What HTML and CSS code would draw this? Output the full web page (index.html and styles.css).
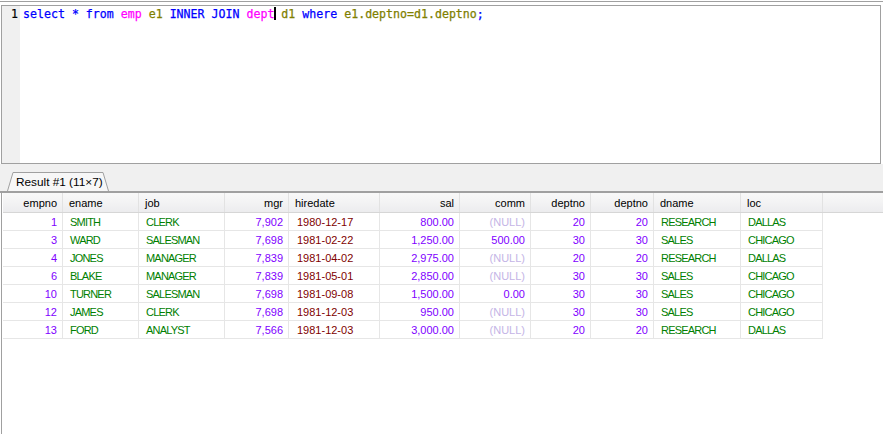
FILE: index.html
```html
<!DOCTYPE html>
<html>
<head>
<meta charset="utf-8">
<link rel="stylesheet" href="styles.css">
</head>
<body>
<div class="app">
  <div class="topline"></div>
  <div class="editor">
    <div class="gutter">1</div>
    <div class="code"><span class="kw">select</span> <span class="kw">*</span> <span class="kw">from</span> <span class="tb">emp</span> <span class="al">e1</span> <span class="kw">INNER</span> <span class="kw">JOIN</span> <span class="tb">dept</span><span class="caret"></span> <span class="al">d1</span> <span class="kw">where</span> <span class="al">e1.deptno=d1.deptno</span><span class="kw">;</span></div>
  </div>
  <div class="tabbar">
    <div class="tab">
      <svg class="tabshape" width="102" height="19" viewBox="0 0 102 19"><path d="M0.5 19 L6 0.5 L96 0.5 L101.5 19" fill="#f7f7f7" stroke="#a0a0a0" stroke-width="1"/></svg>
      <span class="tablabel">Result #1 (11×7)</span>
    </div>
  </div>
  <div class="grid">
    <div class="hrow">
      <div class="h r">empno</div><div class="h">ename</div><div class="h">job</div><div class="h r">mgr</div><div class="h">hiredate</div><div class="h r">sal</div><div class="h r">comm</div><div class="h r">deptno</div><div class="h r">deptno</div><div class="h">dname</div><div class="h">loc</div><div class="h fill"></div>
    </div>
    <div class="drow"><div class="c r n">1</div><div class="c s">SMITH</div><div class="c s">CLERK</div><div class="c r n">7,902</div><div class="c d">1980-12-17</div><div class="c r n">800.00</div><div class="c r null">(NULL)</div><div class="c r n">20</div><div class="c r n">20</div><div class="c s">RESEARCH</div><div class="c s">DALLAS</div></div>
    <div class="drow"><div class="c r n">3</div><div class="c s">WARD</div><div class="c s">SALESMAN</div><div class="c r n">7,698</div><div class="c d">1981-02-22</div><div class="c r n">1,250.00</div><div class="c r n">500.00</div><div class="c r n">30</div><div class="c r n">30</div><div class="c s">SALES</div><div class="c s">CHICAGO</div></div>
    <div class="drow"><div class="c r n">4</div><div class="c s">JONES</div><div class="c s">MANAGER</div><div class="c r n">7,839</div><div class="c d">1981-04-02</div><div class="c r n">2,975.00</div><div class="c r null">(NULL)</div><div class="c r n">20</div><div class="c r n">20</div><div class="c s">RESEARCH</div><div class="c s">DALLAS</div></div>
    <div class="drow"><div class="c r n">6</div><div class="c s">BLAKE</div><div class="c s">MANAGER</div><div class="c r n">7,839</div><div class="c d">1981-05-01</div><div class="c r n">2,850.00</div><div class="c r null">(NULL)</div><div class="c r n">30</div><div class="c r n">30</div><div class="c s">SALES</div><div class="c s">CHICAGO</div></div>
    <div class="drow"><div class="c r n">10</div><div class="c s">TURNER</div><div class="c s">SALESMAN</div><div class="c r n">7,698</div><div class="c d">1981-09-08</div><div class="c r n">1,500.00</div><div class="c r n">0.00</div><div class="c r n">30</div><div class="c r n">30</div><div class="c s">SALES</div><div class="c s">CHICAGO</div></div>
    <div class="drow"><div class="c r n">12</div><div class="c s">JAMES</div><div class="c s">CLERK</div><div class="c r n">7,698</div><div class="c d">1981-12-03</div><div class="c r n">950.00</div><div class="c r null">(NULL)</div><div class="c r n">30</div><div class="c r n">30</div><div class="c s">SALES</div><div class="c s">CHICAGO</div></div>
    <div class="drow"><div class="c r n">13</div><div class="c s">FORD</div><div class="c s">ANALYST</div><div class="c r n">7,566</div><div class="c d">1981-12-03</div><div class="c r n">3,000.00</div><div class="c r null">(NULL)</div><div class="c r n">20</div><div class="c r n">20</div><div class="c s">RESEARCH</div><div class="c s">DALLAS</div></div>
  </div>
</div>
</body>
</html>
```
FILE: styles.css
```css
html, body {
  margin: 0;
  padding: 0;
  background: #ffffff;
}
.app {
  width: 883px;
  height: 434px;
  display: flex;
  flex-direction: column;
  overflow: hidden;
}
.topline {
  margin-top: 1px;
  height: 1px;
  background: #a0a0a0;
  flex: none;
}
.editor {
  margin-top: 3px;
  margin-left: 1px;
  width: 880px;
  height: 159px;
  box-sizing: border-box;
  border: 1px solid #a0a0a0;
  display: flex;
  flex: none;
  background: #fff;
}
.gutter {
  width: 18px;
  background: #f0f0f0;
  font-family: "DejaVu Sans Mono", "Liberation Mono", monospace;
  font-size: 11.6px;
  line-height: 16px;
  text-align: right;
  padding-right: 2px;
  box-sizing: border-box;
  color: #000;
  -webkit-text-stroke: 0.2px #000;
}
.code {
  padding-left: 3px;
  font-family: "DejaVu Sans Mono", "Liberation Mono", monospace;
  font-size: 11.6px;
  line-height: 16px;
  white-space: pre;
  color: #000;
  -webkit-text-stroke: 0.25px currentColor;
}
.kw { color: #0000ff; }
.tb { color: #ff00ff; }
.al { color: #808000; }
.caret {
  display: inline-block;
  width: 2px;
  height: 13px;
  background: #000;
  vertical-align: -2px;
  margin-right: -2px;
}
.tabbar {
  height: 27px;
  background: #f0f0f0;
  border-bottom: 2px solid #a0a0a0;
  display: flex;
  align-items: flex-end;
  flex: none;
}
.tab {
  position: relative;
  margin-left: 7px;
  width: 102px;
  height: 19px;
}
.tabshape {
  position: absolute;
  left: 0;
  top: 0;
}
.tablabel {
  position: relative;
  display: block;
  padding-left: 9px;
  padding-top: 3px;
  font-family: "Liberation Sans", Arial, sans-serif;
  font-size: 11.8px;
  line-height: 14px;
  color: #000;
  white-space: nowrap;
}
.grid {
  flex: 1;
  margin-left: 1px;
  border-left: 1px solid #a0a0a0;
  padding-left: 1px;
  font-family: "Liberation Sans", Arial, sans-serif;
  font-size: 11px;
}
.hrow, .drow {
  display: grid;
  grid-template-columns: 60px 76px 86px 64px 91px 80px 71px 60px 63px 87px 82px;
}
.hrow {
  grid-template-columns: 60px 76px 86px 64px 91px 80px 71px 60px 63px 87px 82px 1fr;
  height: 19px;
  background: linear-gradient(#f8f8f8, #f3f3f4 50%, #ececee);
  border-bottom: 1px solid #d6d6d6;
}
.h {
  box-sizing: border-box;
  border-right: 1px solid #e2e2e2;
  padding: 1px 5px 0 6px;
  line-height: 18px;
  color: #000;
  white-space: nowrap;
}
.h.fill { border-right: none; }
.drow {
  height: 18px;
}
.c {
  box-sizing: border-box;
  border-right: 1px solid #e6e6e6;
  border-bottom: 1px solid #e6e6e6;
  padding: 2px 5px 0 8px;
  line-height: 15px;
  white-space: nowrap;
  overflow: hidden;
}
.r { text-align: right; }
.n { color: #8000ff; }
.s { color: #008000; letter-spacing: -0.8px; padding-left: 7px; }
.d { color: #800000; }
.null { color: #c4b4e6; }
```
